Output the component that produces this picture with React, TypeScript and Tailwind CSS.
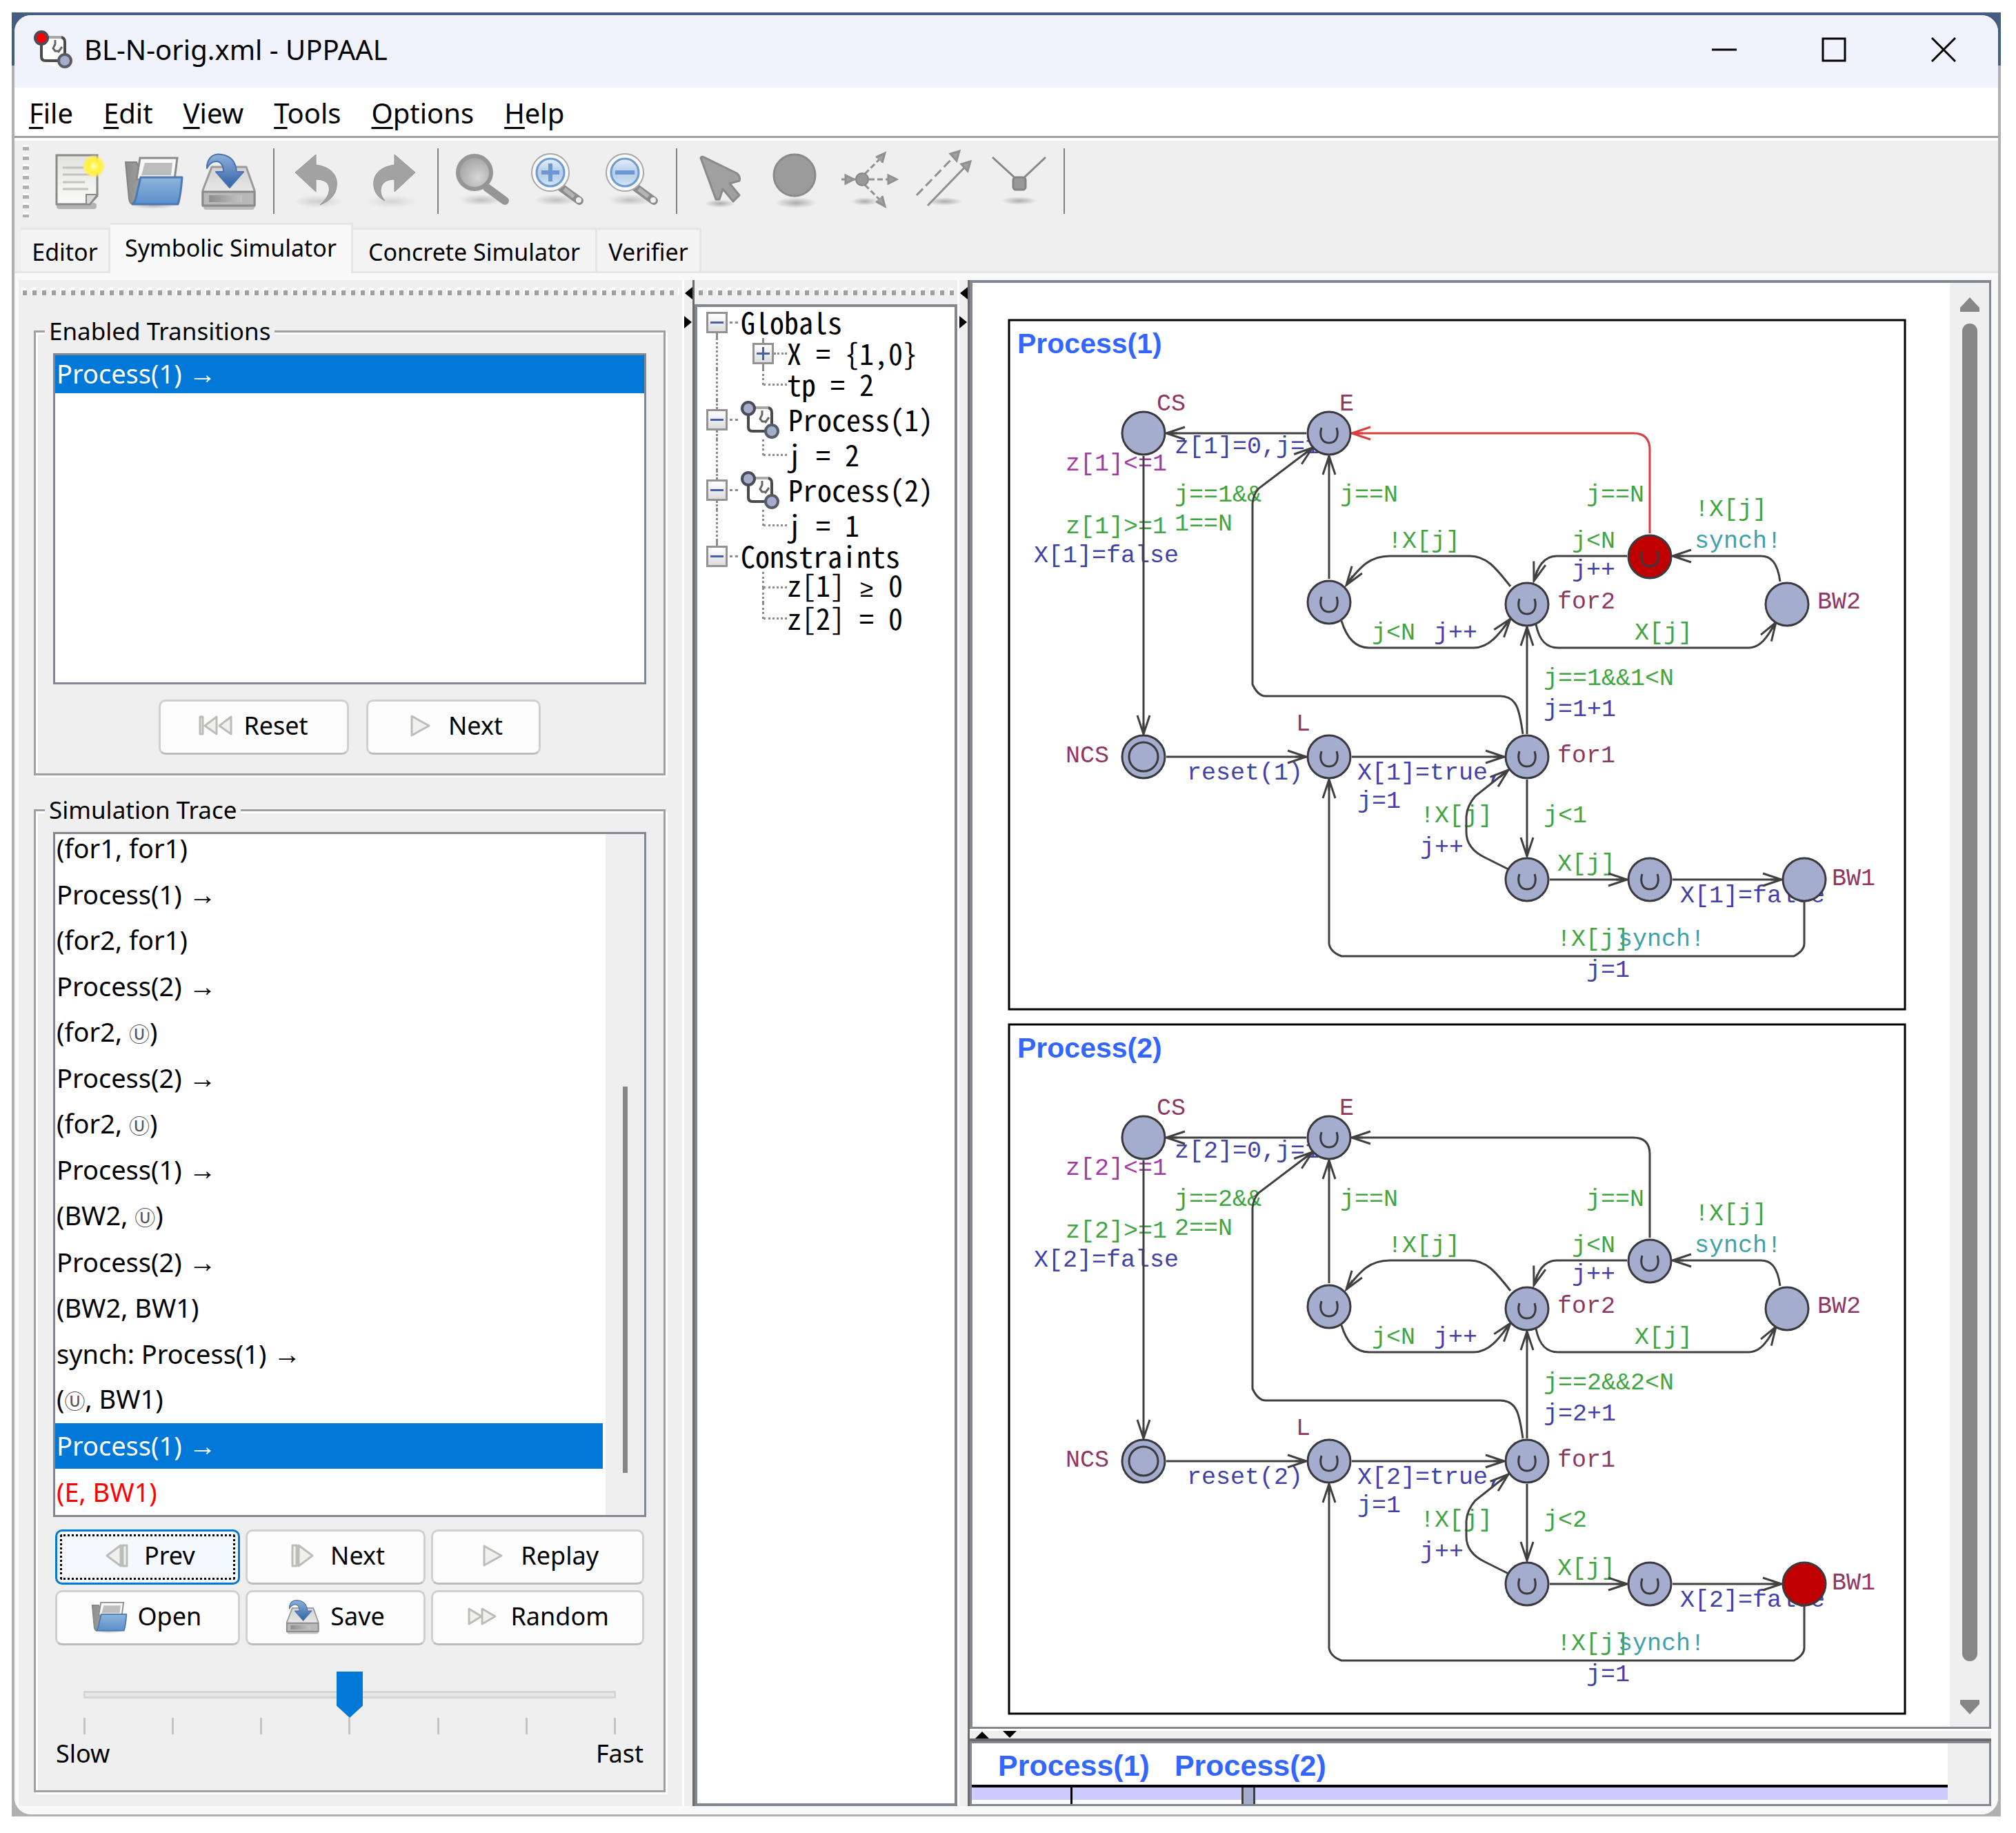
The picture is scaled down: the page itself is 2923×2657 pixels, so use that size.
import { useState, type ReactNode } from 'react';
import { clsx } from 'clsx';

const menus = ['File', 'Edit', 'View', 'Tools', 'Options', 'Help'];
const tabs = [
  { name: 'Editor', width: 'w-[129px]' },
  { name: 'Symbolic Simulator', width: 'w-[352px]' },
  { name: 'Concrete Simulator', width: 'w-[354px]' },
  { name: 'Verifier', width: 'w-[151px]' },
];

const trace = [
  '(for1, for1)',
  'Process(1) →',
  '(for2, for1)',
  'Process(2) →',
  '(for2, Ⓤ)',
  'Process(2) →',
  '(for2, Ⓤ)',
  'Process(1) →',
  '(BW2, Ⓤ)',
  'Process(2) →',
  '(BW2, BW1)',
  'synch: Process(1) →',
  '(Ⓤ, BW1)',
  'Process(1) →',
  '(E, BW1)',
];

/* ---------- toolbar icons ---------- */

function Gradients() {
  return (
    <svg className="absolute h-0 w-0" aria-hidden="true">
      <defs>
        <linearGradient id="paper" x1="0" y1="0" x2="0" y2="1">
          <stop offset="0" stopColor="#e2e2e0" />
          <stop offset="1" stopColor="#fbfbfa" />
        </linearGradient>
        <linearGradient id="folder" x1="0" y1="0" x2="0" y2="1">
          <stop offset="0" stopColor="#8db4dc" />
          <stop offset="1" stopColor="#5a8fca" />
        </linearGradient>
        <linearGradient id="grey" x1="0" y1="0" x2="1" y2="0">
          <stop offset="0" stopColor="#8c8c8c" />
          <stop offset="1" stopColor="#c4c4c4" />
        </linearGradient>
        <linearGradient id="drive" x1="0" y1="0" x2="0" y2="1">
          <stop offset="0" stopColor="#d2d2d2" />
          <stop offset="1" stopColor="#f4f4f4" />
        </linearGradient>
        <linearGradient id="arrow" x1="0" y1="0" x2="0" y2="1">
          <stop offset="0" stopColor="#8fb0d8" />
          <stop offset="1" stopColor="#2f62a8" />
        </linearGradient>
        <linearGradient id="lens" x1="0" y1="0" x2="0" y2="1">
          <stop offset="0" stopColor="#e6effa" />
          <stop offset="0.5" stopColor="#b4cdea" />
          <stop offset="1" stopColor="#d3e3f5" />
        </linearGradient>
        <radialGradient id="lensOff" cx="0.6" cy="0.65" r="0.6">
          <stop offset="0" stopColor="#d6d6d6" />
          <stop offset="1" stopColor="#a6a6a6" />
        </radialGradient>
        <radialGradient id="glow">
          <stop offset="0" stopColor="#ffffc0" />
          <stop offset="0.45" stopColor="#fff23a" />
          <stop offset="0.75" stopColor="#fff04a" stopOpacity="0.85" />
          <stop offset="1" stopColor="#fff04a" stopOpacity="0" />
        </radialGradient>
        <radialGradient id="shade">
          <stop offset="0" stopColor="#000" stopOpacity="0.28" />
          <stop offset="1" stopColor="#000" stopOpacity="0" />
        </radialGradient>
      </defs>
    </svg>
  );
}

function Icon({ children, className = 'size-[92px]' }: { children: ReactNode; className?: string }) {
  return (
    <svg viewBox="0 0 92 92" className={className} fill="none" aria-hidden="true">
      {children}
    </svg>
  );
}

const NewIcon = () => (
  <Icon>
    <rect x="12" y="78" width="58" height="9" rx="4" fill="#000" opacity="0.25" />
    <path d="M12 9H71V68L60 80H12Z" fill="url(#paper)" stroke="#8a8a86" strokeWidth="3" />
    <path d="M71 66H55V80H60Z" fill="#d8d8d6" stroke="#8a8a86" strokeWidth="2" />
    <path d="M21 27H52M21 37H60M21 48H53M21 58H58" stroke="#c2c2c0" strokeWidth="3" />
    <circle cx="66" cy="25" r="17" fill="url(#glow)" />
  </Icon>
);

const FolderIcon = ({ className }: { className?: string }) => (
  <Icon className={className}>
    <ellipse cx="45" cy="81" rx="34" ry="6" fill="url(#shade)" />
    <path d="M4 19H20L22 24H72V80H15Q10 80 9 72Z" fill="url(#grey)" stroke="#828282" strokeWidth="2" />
    <path d="M25 13H79L75 44H20Z" fill="#f8f8f8" stroke="#8a8a8a" strokeWidth="3" />
    <path d="M32 20H72L70 38H27Z" fill="#bdbdbd" />
    <path d="M26 41H86Q84 68 80 80H14Q19 76 21 62Z" fill="url(#folder)" stroke="#4a7ab4" strokeWidth="3" strokeLinejoin="round" />
  </Icon>
);

const SaveIcon = ({ className }: { className?: string }) => (
  <Icon className={className}>
    <rect x="9" y="80" width="74" height="8" rx="4" fill="#000" opacity="0.22" />
    <path d="M21 26H71L83 60V82H8V60Z" fill="url(#drive)" stroke="#9a9a9a" strokeWidth="3" strokeLinejoin="round" />
    <path d="M8 62H83V82H8Z" fill="#b8b8b8" stroke="#8a8a8a" strokeWidth="3" strokeLinejoin="round" />
    <rect x="17" y="67" width="48" height="10" fill="url(#grey)" />
    <path
      d="M14 24C16 10 26 6 35 8C50 10 56 20 57 33H67L47 56L27 33H38C38 24 34 18 28 18C22 18 17 22 14 28Z"
      fill="url(#arrow)"
      stroke="#4a74b0"
      strokeWidth="2"
      strokeLinejoin="round"
    />
  </Icon>
);

const UndoIcon = () => (
  <Icon>
    <ellipse cx="46" cy="76" rx="36" ry="9" fill="url(#shade)" opacity="0.5" />
    <path d="M12 34L42 8V23C64 26 74 38 72 54C71 68 60 76 48 81C59 71 64 61 60 52C58 47 51 44 42 44V62Z" fill="#a2a2a2" stroke="#949494" strokeWidth="1" />
  </Icon>
);

const RedoIcon = () => (
  <Icon>
    <ellipse cx="44" cy="76" rx="36" ry="9" fill="url(#shade)" opacity="0.4" />
    <path d="M78 34L48 8V23C26 26 16 38 18 54C19 63 25 71 34 75C28 68 26 60 30 52C33 47 39 44 48 44V62Z" fill="#a2a2a2" stroke="#949494" strokeWidth="1" />
  </Icon>
);

function ZoomIcon({ sign }: { sign?: 'in' | 'out' }) {
  return (
    <Icon>
      <ellipse cx="44" cy="74" rx="32" ry="8" fill="url(#shade)" opacity="0.7" />
      <path d="M52 56L78 75" stroke={sign ? '#8c8c8c' : '#969696'} strokeWidth="12" strokeLinecap="round" />
      {sign && <path d="M56 58L70 69" stroke="#b4b4b4" strokeWidth="6" />}
      {sign && <circle cx="77" cy="74" r="4" fill="#eee" />}
      {sign ? (
        <>
          <circle cx="36" cy="34" r="27" fill="#fafafa" stroke="#a8a8a8" strokeWidth="2" />
          <circle cx="36" cy="34" r="20" fill="url(#lens)" stroke="#6f9bd0" strokeWidth="3" />
          <path d={sign === 'in' ? 'M23 34H49M36 21V47' : 'M22 34H50'} stroke="#6b98d0" strokeWidth="6" />
        </>
      ) : (
        <circle cx="34" cy="34" r="24" fill="url(#lensOff)" stroke="#969696" strokeWidth="6" />
      )}
    </Icon>
  );
}

const CursorIcon = () => (
  <Icon>
    <ellipse cx="44" cy="79" rx="22" ry="6" fill="url(#shade)" />
    <path d="M16 13Q17 10 21 12L68 35Q74 40 72 46L58 50L72 67L63 76L48 58L43 73L38 73Z" fill="#a0a0a0" stroke="#8a8a8a" strokeWidth="3" strokeLinejoin="round" />
  </Icon>
);

const LocationIcon = () => (
  <Icon>
    <ellipse cx="46" cy="78" rx="30" ry="8" fill="url(#shade)" />
    <circle cx="44" cy="38" r="30" fill="#9b9b9b" stroke="#8a8a8a" strokeWidth="3" />
  </Icon>
);

const BranchIcon = () => (
  <Icon>
    <ellipse cx="38" cy="76" rx="20" ry="6" fill="url(#shade)" />
    <g stroke="#909090" strokeWidth="3">
      <path d="M4 44H26M38 36L62 12M38 52L62 76M44 44H74" strokeDasharray="8 4" />
      <path d="M54 12L67 6L63 20M54 76L67 83L63 68M72 38L84 44L72 50ZM10 38L22 44L10 50Z" fill="#a0a0a0" />
    </g>
    <circle cx="34" cy="44" r="9" fill="#999" stroke="#858585" strokeWidth="2" />
  </Icon>
);

const EdgeIcon = () => (
  <Icon>
    <ellipse cx="46" cy="76" rx="26" ry="6" fill="url(#shade)" />
    <g stroke="#909090" strokeWidth="3">
      <path d="M5 67L64 6" strokeDasharray="13 6" />
      <path d="M21 82L80 21" />
      <path d="M54 7L67 3L63 17ZM70 22L83 18L79 32Z" fill="#a0a0a0" />
    </g>
  </Icon>
);

const NailIcon = () => (
  <Icon>
    <ellipse cx="46" cy="75" rx="26" ry="6" fill="url(#shade)" />
    <path d="M7 12L42 44M84 12L50 44" stroke="#888" strokeWidth="3" />
    <rect x="37" y="41" width="18" height="18" rx="4" fill="#989898" stroke="#848484" strokeWidth="3" />
  </Icon>
);

const toolGroups: { label: string; icon: ReactNode }[][] = [
  [
    { label: 'New', icon: <NewIcon /> },
    { label: 'Open', icon: <FolderIcon /> },
    { label: 'Save', icon: <SaveIcon /> },
  ],
  [
    { label: 'Undo', icon: <UndoIcon /> },
    { label: 'Redo', icon: <RedoIcon /> },
  ],
  [
    { label: 'Zoom', icon: <ZoomIcon /> },
    { label: 'Zoom in', icon: <ZoomIcon sign="in" /> },
    { label: 'Zoom out', icon: <ZoomIcon sign="out" /> },
  ],
  [
    { label: 'Select', icon: <CursorIcon /> },
    { label: 'Add location', icon: <LocationIcon /> },
    { label: 'Add branch point', icon: <BranchIcon /> },
    { label: 'Add edge', icon: <EdgeIcon /> },
    { label: 'Add nail', icon: <NailIcon /> },
  ],
];

// Two small locations joined by an edge; the window icon has the first one in red
function ProcessIcon({ first = '#a5adce' }: { first?: string }) {
  return (
    <svg viewBox="0 0 57 56" className="h-14 w-[57px] shrink-0" fill="none" aria-hidden="true">
      <path d="M8 14Q24 6 42 8Q50 30 46 52Q28 56 14 44Z" fill="#fff" />
      <path d="M11 20V38Q11 44 17 44H36M20 10H38Q45 10 45 17V34" stroke="#4a4a4a" strokeWidth="4" />
      <path d="M22 10H40" stroke="#a8a8a8" strokeWidth="4" />
      <path d="M31 14V20L28 26L31 30H38M41 24L35 32" stroke="#666" strokeWidth="3" />
      <circle cx="11" cy="11" r="9" fill={first} stroke="#4c4c58" strokeWidth="4" />
      <circle cx="45" cy="44" r="9" fill="#a5adce" stroke="#5a5a66" strokeWidth="4" />
    </svg>
  );
}

/* ---------- buttons ---------- */

function PlayIcon({ d }: { d: string }) {
  return (
    <svg viewBox="0 0 56 56" className="size-14" fill="#f0f1ee" stroke="#bcbcb8" strokeWidth="3" strokeLinejoin="round" aria-hidden="true">
      <path d={d} />
    </svg>
  );
}

const icons = {
  reset: <PlayIcon d="M5 15H9V40H5ZM29 15V40L12 28ZM50 15V40L33 28Z" />,
  play: <PlayIcon d="M15 14L40 28L15 42Z" />,
  prev: <PlayIcon d="M37 13H43V43H37ZM34 13V43L14 28Z" />,
  next: <PlayIcon d="M13 13H19V43H13ZM22 13L42 28L22 43Z" />,
  random: <PlayIcon d="M8 17L26 28L8 39ZM27 17L46 28L27 39Z" />,
  open: <FolderIcon className="size-14" />,
  save: <SaveIcon className="size-14" />,
};

function Button({ icon, children, focused, className }: { icon: ReactNode; children: string; focused?: boolean; className?: string }) {
  return (
    <button
      className={clsx(
        'flex h-20 items-center justify-center gap-3 rounded-[10px] border-[3px] pr-1 pb-1 text-[36px] leading-[48px]',
        focused
          ? 'border-[#0078d7] bg-[#f4f9fe] outline-[3px] [outline-offset:-10px] outline-black outline-dotted'
          : 'border-[#d0d0d0] border-b-[#bcbcbc] bg-[#fdfdfd]',
        className,
      )}
    >
      {icon}
      {children}
    </button>
  );
}

/* ---------- left column ---------- */

function DotGrip() {
  return (
    <div className="mt-[11px] px-1" aria-hidden="true">
      <div className="h-1 bg-[repeating-linear-gradient(to_right,#fff_0_7px,transparent_7px_14px)]" />
      <div className="h-[7px] bg-[repeating-linear-gradient(to_right,#fff_0_2px,#9f9f9f_2px_8px,transparent_8px_14px)]" />
    </div>
  );
}

function Group({ title, children, className }: { title: string; children: ReactNode; className?: string }) {
  return (
    <fieldset
      className={clsx(
        'mr-6 ml-[22px] min-w-0 flex-col border-[3px] border-[#a0a0a0] px-[25px] pt-2 pb-[27px] shadow-[3px_3px_0_#fff,inset_3px_3px_0_#fff]',
        className,
      )}
    >
      <legend className="-ml-3 bg-[#efefef] px-[6px] text-[35px] leading-[48px]">{title}</legend>
      {children}
    </fieldset>
  );
}

// The arrow and the urgent mark come from other faces than the list's own text
function TraceText({ text }: { text: string }) {
  return (
    <span>
      {text.split(/([Ⓤ→])/).map((part, i) => {
        if (part === 'Ⓤ') return <span key={i} className="font-['Noto_Sans_CJK_JP',sans-serif] text-[30px] text-[#555]">Ⓤ</span>;
        if (part === '→') return <span key={i} className="font-['Liberation_Sans',sans-serif] text-[40px] leading-none">→</span>;
        return part;
      })}
    </span>
  );
}

function LeftPanel() {
  const [speed, setSpeed] = useState(3);
  return (
    <div className="flex w-[962px] shrink-0 flex-col">
      <DotGrip />
      <Group title="Enabled Transitions" className="mt-7 flex">
        <ul className="h-[480px] border-[3px] border-[#838890] bg-white text-[38px]">
          <li className="flex h-[55px] items-center bg-[#0078d7] pb-1 pl-[2px] leading-[50px] whitespace-pre text-white">
            <TraceText text="Process(1) →" />
          </li>
        </ul>
        <div className="mt-[22px] flex justify-center gap-[25px]">
          <Button icon={icons.reset} className="w-[276px]">Reset</Button>
          <Button icon={icons.play} className="w-[253px]">Next</Button>
        </div>
      </Group>

      <Group title="Simulation Trace" className="mt-[26px] mb-5 flex flex-1">
        <div className="flex flex-1 overflow-hidden border-[3px] border-[#838890] bg-white">
          <ul className="-mt-3 grid flex-1 auto-rows-fr text-[38px] leading-[50px]">
            {trace.map((row, i) => (
              <li
                key={i}
                className={clsx(
                  'flex items-center pb-[2px] pl-[2px] whitespace-pre',
                  i === 13 && 'bg-[#0078d7] text-white',
                  i === 14 && 'text-[#ff0000]',
                )}
              >
                <TraceText text={row} />
              </li>
            ))}
          </ul>
          <div className="ml-1 flex w-14 flex-col items-center bg-[#efefef]" aria-hidden="true">
            <div className="mt-[366px] h-[560px] w-[7px] bg-[#868686]" />
          </div>
        </div>

        <div className="mx-[3px] mt-[18px] grid grid-cols-[268fr_262fr_309fr] gap-2">
          <Button icon={icons.prev} focused>Prev</Button>
          <Button icon={icons.next}>Next</Button>
          <Button icon={icons.play}>Replay</Button>
          <Button icon={icons.open}>Open</Button>
          <Button icon={icons.save}>Save</Button>
          <Button icon={icons.random}>Random</Button>
        </div>

        <input
          type="range"
          min={0}
          max={6}
          value={speed}
          onChange={(e) => setSpeed(Number(e.target.value))}
          aria-label="Simulation speed"
          className="mx-11 mt-[38px] h-[67px] appearance-none bg-transparent [&::-webkit-slider-runnable-track]:h-[11px] [&::-webkit-slider-runnable-track]:border-[3px] [&::-webkit-slider-runnable-track]:border-[#d5d5d5] [&::-webkit-slider-runnable-track]:bg-[#e7e7e7] [&::-webkit-slider-thumb]:-mt-[31px] [&::-webkit-slider-thumb]:h-[67px] [&::-webkit-slider-thumb]:w-[38px] [&::-webkit-slider-thumb]:appearance-none [&::-webkit-slider-thumb]:bg-[#0078d7] [&::-webkit-slider-thumb]:[clip-path:polygon(0_0,100%_0,100%_74%,50%_100%,0_74%)]"
        />
        <div className="mx-11 flex justify-between" aria-hidden="true">
          {Array.from({ length: 7 }, (_, i) => (
            <span key={i} className="h-6 w-[3px] bg-[#c4c4c4]" />
          ))}
        </div>
        <div className="mx-1 mt-[2px] flex justify-between text-[36px] leading-[52px]">
          <span>Slow</span>
          <span>Fast</span>
        </div>
      </Group>
    </div>
  );
}

/* ---------- variables tree ---------- */

type TreeRow = { text: string; box?: '-' | '+'; level: 0 | 1; icon?: boolean; up?: boolean; down?: boolean; outer?: boolean };

const treeRows: TreeRow[] = [
  { text: 'Globals', box: '-', level: 0, down: true },
  { text: 'X = {1,0}', box: '+', level: 1, up: true, down: true, outer: true },
  { text: 'tp = 2', level: 1, up: true, outer: true },
  { text: 'Process(1)', box: '-', level: 0, icon: true, up: true, down: true },
  { text: 'j = 2', level: 1, up: true, outer: true },
  { text: 'Process(2)', box: '-', level: 0, icon: true, up: true, down: true },
  { text: 'j = 1', level: 1, up: true, outer: true },
  { text: 'Constraints', box: '-', level: 0, up: true },
  { text: 'z[1] ≥ 0', level: 1, up: true, down: true },
  { text: 'z[2] = 0', level: 1, up: true },
];

const vline = (on?: boolean) => clsx('ml-[14px] flex-1', on && 'border-l-[3px] border-dotted border-[#8c8c8c]');

function Gutter({ row }: { row: TreeRow }) {
  return (
    <div className="flex w-[31px] flex-col self-stretch">
      <div className={vline(row.up)} />
      {row.box && (
        <button
          aria-label={row.box === '+' ? 'Expand' : 'Collapse'}
          className="flex size-[31px] items-center justify-center border-[3px] border-[#929292] bg-linear-to-b from-white to-[#dcdcdc]"
        >
          <svg viewBox="0 0 19 19" className="size-[19px]" stroke="#4560a8" strokeWidth="3" aria-hidden="true">
            <path d={row.box === '+' ? 'M0 9.5H19M9.5 0V19' : 'M0 9.5H19'} />
          </svg>
        </button>
      )}
      <div className={vline(row.down)} />
    </div>
  );
}

function TreeText({ text }: { text: string }) {
  const [left, right] = text.split('≥');
  return (
    <span className="pb-[3px]">
      {left}
      {right !== undefined && <span className="font-['Liberation_Mono',monospace] text-[35px] leading-none">≥</span>}
      {right}
    </span>
  );
}

function TreePanel() {
  return (
    <div className="flex w-[381px] shrink-0 flex-col">
      <DotGrip />
      <div className="mt-[13px] flex-1 border-4 border-[#838890] bg-white pl-[13px] font-['Noto_Sans_Mono_CJK_JP','Liberation_Mono',monospace] text-[42px] leading-[42px] whitespace-pre">
        {treeRows.map((row, i) => (
          <div key={i} className={clsx('flex items-center', row.icon ? 'h-[57px]' : 'h-[45px]')}>
            {row.level === 0 ? (
              <>
                <Gutter row={row} />
                <span className="mr-1 ml-[3px] w-3 border-t-[3px] border-dotted border-[#8c8c8c]" />
                {row.icon && (
                  <span className="mr-3">
                    <ProcessIcon />
                  </span>
                )}
              </>
            ) : (
              <>
                <div className="flex w-[31px] self-stretch">
                  <div className={vline(row.outer)} />
                </div>
                <div className="w-9" />
                <Gutter row={row} />
                <span
                  className={clsx('border-t-[3px] border-dotted border-[#8c8c8c]', row.box ? 'w-[19px]' : '-ml-[15px] w-[34px]')}
                />
              </>
            )}
            <TreeText text={row.text} />
          </div>
        ))}
      </div>
    </div>
  );
}

/* ---------- automata ---------- */

const GREEN = '#41a541';
const BLUE = '#4141a8';
const MAROON = '#8f3763';
const PURPLE = '#a33aa3';
const TEAL = '#41a0a8';
const EDGE = '#404040';
const RED = '#d84040';

function labelsFor(n: number): [number, number, string, string][] {
  return [
    [216, 133, 'CS', MAROON],
    [481, 133, 'E', MAROON],
    [84, 220, `z[${n}]<=1`, PURPLE],
    [242, 195, `z[${n}]=0,j=1`, BLUE],
    [242, 265, `j==${n}&&`, GREEN],
    [242, 307, `${n}==N`, GREEN],
    [84, 311, `z[${n}]>=1`, GREEN],
    [38, 353, `X[${n}]=false`, BLUE],
    [482, 265, 'j==N', GREEN],
    [551, 332, '!X[j]', GREEN],
    [528, 465, 'j<N', GREEN],
    [618, 465, 'j++', BLUE],
    [839, 265, 'j==N', GREEN],
    [996, 286, '!X[j]', GREEN],
    [996, 332, 'synch!', TEAL],
    [818, 332, 'j<N', GREEN],
    [818, 374, 'j++', BLUE],
    [797, 420, 'for2', MAROON],
    [1174, 420, 'BW2', MAROON],
    [909, 465, 'X[j]', GREEN],
    [777, 531, `j==${n}&&${n}<N`, GREEN],
    [777, 576, `j=${n}+1`, BLUE],
    [797, 643, 'for1', MAROON],
    [777, 730, `j<${n}`, GREEN],
    [797, 800, 'X[j]', GREEN],
    [1195, 821, 'BW1', MAROON],
    [975, 846, `X[${n}]=false`, BLUE],
    [796, 909, '!X[j]', GREEN],
    [885, 909, 'synch!', TEAL],
    [839, 954, 'j=1', BLUE],
    [84, 643, 'NCS', MAROON],
    [418, 597, 'L', MAROON],
    [260, 668, `reset(${n})`, BLUE],
    [507, 668, `X[${n}]=true,`, BLUE],
    [507, 709, 'j=1', BLUE],
    [598, 730, '!X[j]', GREEN],
    [598, 776, 'j++', BLUE],
  ];
}

const edges = [
  'M433 166H230',
  'M197 199V602',
  'M230 635H433',
  'M499 635H720',
  'M753 602V447',
  'M753 668V779',
  'M786 813H898',
  'M964 813H1122',
  'M466 377V199',
  'M747 602C742 566 738 547 714 547H374Q363 547 355 530V268Q356 255 364 246L442 187',
  'M729 388C707 360 694 344 670 344H554C526 344 512 358 491 386',
  'M484 438C492 464 506 477 524 477H676C698 477 712 458 729 435',
  'M898 344H796C776 344 768 362 763 380',
  'M1120 381C1116 352 1106 344 1092 344H964',
  'M766 443C771 468 782 477 798 477H1074C1094 477 1104 456 1114 440',
  'M726 798L692 781Q665 768 665 744V722Q666 706 678 692L726 654',
  'M1155 846V906Q1155 916 1140 924H484Q468 918 466 906V668',
];

// arrow heads: tip x, tip y, direction in degrees (0 points right)
const heads: [number, number, number][] = [
  [230, 166, 180],
  [197, 602, 90],
  [433, 635, 0],
  [720, 635, 0],
  [753, 447, -90],
  [753, 779, 90],
  [898, 813, 0],
  [1122, 813, 0],
  [466, 199, -90],
  [442, 187, -38],
  [491, 386, 125],
  [729, 435, -52],
  [763, 380, 108],
  [964, 344, 180],
  [1114, 440, -58],
  [726, 654, -40],
  [466, 668, -90],
];

type Location = { id: string; x: number; y: number; urgent?: boolean; initial?: boolean };

const locations: Location[] = [
  { id: 'CS', x: 197, y: 166 },
  { id: 'E', x: 466, y: 166, urgent: true },
  { id: 'u1', x: 466, y: 411, urgent: true },
  { id: 'for2', x: 753, y: 414, urgent: true },
  { id: 'u2', x: 931, y: 345, urgent: true },
  { id: 'BW2', x: 1130, y: 414 },
  { id: 'NCS', x: 197, y: 635, initial: true },
  { id: 'L', x: 466, y: 635, urgent: true },
  { id: 'for1', x: 753, y: 635, urgent: true },
  { id: 'u3', x: 753, y: 813, urgent: true },
  { id: 'u4', x: 931, y: 813, urgent: true },
  { id: 'BW1', x: 1155, y: 813 },
];

function Automaton({ n, active, firing }: { n: number; active: string; firing?: boolean }) {
  const exitColor = firing ? RED : EDGE;
  return (
    <svg viewBox="0 0 1303 1003" className="w-full shrink-0" role="img" aria-label={`Automaton of Process(${n})`}>
      <rect x="2" y="2" width="1299" height="999" fill="#fff" stroke="#000" strokeWidth="3" />
      <text x="14" y="50" fill="#3366ff" className="font-['Liberation_Sans',sans-serif] text-[41px] font-bold">
        Process({n})
      </text>
      {labelsFor(n).map(([x, y, text, color], i) => (
        <text key={i} x={x} y={y} fill={color} className="font-['Liberation_Mono',monospace] text-[35px]">
          {text}
        </text>
      ))}
      <g fill="none" stroke={EDGE} strokeWidth="3">
        {edges.map((d) => (
          <path key={d} d={d} />
        ))}
        {heads.map(([x, y, a], i) => (
          <path key={i} d="M-27 -9L0 0L-27 9M-16 0H0" transform={`translate(${x} ${y}) rotate(${a})`} />
        ))}
        <path d="M931 311V190Q931 166 907 166H499" stroke={exitColor} />
        <path d="M-27 -9L0 0L-27 9M-16 0H0" transform="translate(499 166) rotate(180)" stroke={exitColor} />
      </g>
      {locations.map(({ id, x, y, urgent, initial }) => (
        <g key={id} transform={`translate(${x} ${y})`} stroke="#3a3a3e" strokeWidth="3">
          <circle r="31" fill={id === active ? '#c00000' : '#a5adce'} />
          {initial && <circle r="21" fill="none" />}
          {urgent && <path d="M-11 -8C-15 6 -9 14 0 14S15 6 11 -8" fill="none" />}
        </g>
      ))}
    </svg>
  );
}

/* ---------- splitters ---------- */

function Splitter() {
  return (
    <div className="flex w-[18px] shrink-0 border-r-[3px] border-l-[3px] border-l-white border-r-[#6b6b6b] bg-[#efefef]">
      <svg viewBox="0 0 12 64" className="mt-2 h-16 w-3" aria-hidden="true">
        <path d="M12 2V20L1 11ZM0 44V62L11 53Z" fill="#000" />
      </svg>
    </div>
  );
}

function RightPanel() {
  return (
    <div className="flex min-w-0 flex-1 flex-col">
      <div className="flex flex-1 border-4 border-r-[3px] border-b-[3px] border-[#838890] bg-white">
        <div className="flex flex-1 flex-col gap-[18px] pt-[52px] pr-[63px] pl-[51px]">
          <Automaton n={1} active="u2" firing />
          <Automaton n={2} active="BW1" />
        </div>
        <div className="flex w-[57px] flex-col items-center bg-[#efefef] pt-[21px] pb-[18px]" aria-hidden="true">
          <svg viewBox="0 0 28 21" className="h-[21px] w-7">
            <path d="M14 0L28 15V21H0V15Z" fill="#868686" />
          </svg>
          <div className="mt-[17px] mb-14 w-[22px] flex-1 rounded-full bg-[#868686]" />
          <svg viewBox="0 0 28 21" className="h-[21px] w-7">
            <path d="M14 21L28 6V0H0V6Z" fill="#868686" />
          </svg>
        </div>
      </div>

      <div className="h-[18px] border-t-[3px] border-b-4 border-t-white border-b-[#6b6b6b] bg-[#efefef]">
        <svg viewBox="0 0 80 11" className="ml-2 h-[11px] w-20" aria-hidden="true">
          <path d="M0 11H20L10 1ZM40 0H60L50 10Z" fill="#000" />
        </svg>
      </div>

      <div className="flex h-[94px] border-[3px] border-[#838890] bg-white">
        <div className="flex flex-1 flex-col">
          <div className="flex h-[60px] items-center gap-9 pt-1 pl-[38px] font-['Liberation_Sans',sans-serif] text-[43px] leading-[56px] font-bold text-[#3366ff]">
            <span>Process(1)</span>
            <span>Process(2)</span>
          </div>
          <div className="flex flex-1 border-t-4 border-black bg-[linear-gradient(#ccccff_18px,#fff_18px)]">
            <div className="w-[146px] border-r-[3px] border-black" />
            <div className="w-[245px]" />
            <div className="w-5 border-x-[3px] border-[#404040] bg-[#a5adce]" />
          </div>
        </div>
        <div className="w-[60px] bg-[#efefef]" />
      </div>
    </div>
  );
}

export default function App() {
  const [activeTab, setActiveTab] = useState('Symbolic Simulator');

  return (
    <div className="flex min-h-screen bg-white pt-[18px] pr-[22px] pb-6 pl-[17px] font-['Noto_Sans',sans-serif] text-black">
      <Gradients />
      <div className="flex flex-1 bg-[linear-gradient(#465d82_77px,#b0b0b0_77px)] px-1 pt-1 pb-[3px]">
        <div className="flex min-w-0 flex-1 flex-col overflow-hidden rounded-[24px] bg-[#efefef]">
          {/* Title bar */}
          <header className="flex h-[105px] items-center bg-[#f0f3fb] pb-[6px] pl-7">
            <ProcessIcon first="#ff0000" />
            <h1 className="ml-4 flex-1 text-[40px] leading-[56px]">BL-N-orig.xml - UPPAAL</h1>
            {[
              ['Minimize', 'M0 18H36'],
              ['Maximize', 'M2 2H34V34H2Z'],
              ['Close', 'M1 1L35 35M35 1L1 35'],
            ].map(([label, d]) => (
              <button key={label} aria-label={label} className="flex h-full w-[159px] items-center justify-center">
                <svg viewBox="0 0 36 36" className="size-9" fill="none" stroke="#000" strokeWidth="3" aria-hidden="true">
                  <path d={d} />
                </svg>
              </button>
            ))}
          </header>

          {/* Menu bar */}
          <nav className="flex h-[70px] items-center gap-11 bg-white pt-[3px] pl-[21px] text-[40px] leading-[56px]">
            {menus.map((m) => (
              <button key={m}>
                <span className="underline decoration-[3px] underline-offset-[5px]">{m[0]}</span>
                {m.slice(1)}
              </button>
            ))}
          </nav>
          <div className="h-[7px] border-t-[3px] border-[#9f9f9f] bg-white" />

          {/* Toolbar */}
          <div className="flex h-28 items-center pt-1 pl-3">
            <div className="mr-5 h-[105px] w-[9px] bg-[repeating-linear-gradient(to_bottom,#fff_0_3px,#b0b0b0_3px_8px,transparent_8px_14px)]" />
            {toolGroups.map((group, i) => (
              <div key={i} className="flex items-center">
                {group.map(({ label, icon }) => (
                  <button key={label} aria-label={label} className="flex w-[108px] justify-center">
                    {icon}
                  </button>
                ))}
                <div className="mx-[10px] h-[95px] w-[2px] bg-[#808080]" />
              </div>
            ))}
          </div>

          {/* Tabs */}
          <div role="tablist" className="flex h-20 items-end border-b-[3px] border-[#e5e5e5] pl-[10px]">
            {tabs.map(({ name, width }) => (
              <button
                key={name}
                role="tab"
                aria-selected={name === activeTab}
                onClick={() => setActiveTab(name)}
                className={clsx(
                  'border-t-[3px] border-r-[3px] border-[#e5e5e5] text-[34px] leading-[48px] whitespace-nowrap',
                  width,
                  name === activeTab ? '-mb-[3px] h-[73px] bg-[#f9f9f9] pb-1' : 'h-[63px] bg-[#f3f3f3] pt-1',
                )}
              >
                {name}
              </button>
            ))}
          </div>

          {/* Simulator */}
          <main className="flex flex-1 bg-[#f9f9f9] pt-[10px] pr-[10px] pb-3 pl-[6px]">
            <div className="flex min-w-0 flex-1 bg-[#efefef]">
              <LeftPanel />
              <Splitter />
              <TreePanel />
              <Splitter />
              <RightPanel />
            </div>
          </main>
        </div>
      </div>
    </div>
  );
}
